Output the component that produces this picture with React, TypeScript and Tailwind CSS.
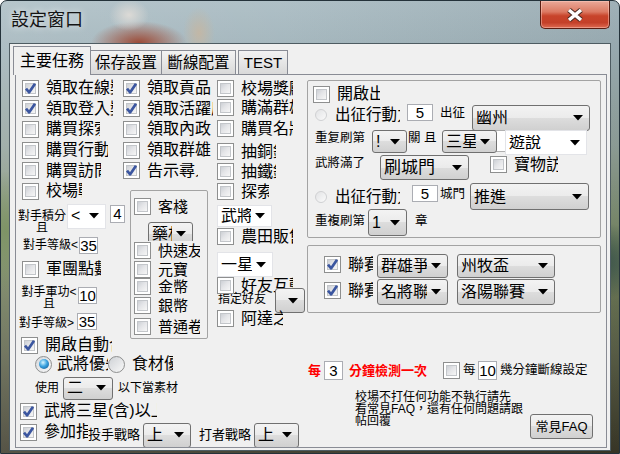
import React from "react";

type CBProps = { checked?: boolean; label?: string; className?: string; text?: string };

const Check = ({ checked = false }: { checked?: boolean }) => (
  <span className="relative block w-[17px] h-[17px] shrink-0 border border-[#8e8f8f] bg-white">
    <span className="absolute inset-[2px] border border-[#c3c6ca] bg-[linear-gradient(135deg,#cdd0d5,#e4e5e8_45%,#f6f6f6)]" />
    {checked && (
      <svg className="absolute left-0 top-0" width="15" height="15" viewBox="0 0 15 15">
        <path d="M3 7.6 L6.2 11.3 L12 2.8" fill="none" stroke="#3b56a0" strokeWidth="2.7" strokeLinejoin="round" />
      </svg>
    )}
  </span>
);

const CB = ({ checked, label, className = "", text = "text-[16px]" }: CBProps) => (
  <div className={`flex shrink-0 items-center gap-[7px] overflow-hidden whitespace-nowrap ${className}`}>
    <Check checked={checked} />
    {label && <span className={`leading-none ${text}`}>{label}</span>}
  </div>
);

const Tri = () => (
  <svg width="10" height="6" viewBox="0 0 10 6" className="shrink-0">
    <polygon points="0,0 10,0 5,5.5" fill="#000" />
  </svg>
);

const Combo = ({
  label = "",
  className = "",
  white = false,
  text = "text-[16px]",
}: {
  label?: string;
  className?: string;
  white?: boolean;
  text?: string;
}) => (
  <div
    className={`flex shrink-0 items-center gap-[4px] overflow-hidden pr-[6px] ${
      white
        ? "bg-white border border-[#e3e4e8]"
        : "rounded-[3px] border border-[#707070] bg-[linear-gradient(#f3f3f3,#ebebeb_50%,#dddddd_50%,#d0d0d0)]"
    } ${className}`}
  >
    <span className={`flex-1 min-w-0 overflow-hidden whitespace-nowrap pl-[3px] leading-none ${text}`}>{label}</span>
    <Tri />
  </div>
);

const TB = ({ value, className = "" }: { value: string; className?: string }) => (
  <div
    className={`flex shrink-0 items-center justify-center bg-white border border-[#abadb3] text-[15px] leading-none font-['Liberation_Sans',sans-serif] ${className}`}
  >
    {value}
  </div>
);

const L = ({ children, className = "" }: { children: React.ReactNode; className?: string }) => (
  <div className={`shrink-0 whitespace-nowrap leading-none ${className}`}>{children}</div>
);

const RadioOn = () => (
  <span className="flex items-center justify-center w-[17px] h-[17px] shrink-0 rounded-full border border-[#8e8f8f] bg-[linear-gradient(135deg,#d6d9dd,#f7f7f7)]">
    <span className="w-[10px] h-[10px] rounded-full bg-[radial-gradient(circle_at_40%_35%,#d8f6ff,#3aa2e0_45%,#0a4b86)]" />
  </span>
);

const RadioOff = () => (
  <span className="block w-[17px] h-[17px] shrink-0 rounded-full border border-[#8e8f8f] bg-[linear-gradient(135deg,#cfd2d6,#f8f8f8)]" />
);

const RadioDis = () => (
  <span className="block w-[12px] h-[12px] shrink-0 rounded-full border border-[#cfd0d2] bg-[linear-gradient(135deg,#e2e3e5,#fafafa)]" />
);

const Row = ({ children, className = "" }: { children: React.ReactNode; className?: string }) => (
  <div className={`flex shrink-0 items-start ${className}`}>{children}</div>
);

export default function App() {
  return (
    <div className="w-[620px] h-[454px] flex flex-col overflow-hidden rounded-t-[7px] border border-[#24323a] px-[8px] pb-[6px] text-black font-['Liberation_Sans','Noto_Sans_CJK_TC',sans-serif] bg-[radial-gradient(20px_16px_at_128px_14px,#dcdad6,transparent),radial-gradient(48px_22px_at_138px_42px,#9c4a36,transparent),radial-gradient(16px_26px_at_198px_32px,#c2b7a6,transparent),radial-gradient(60px_40px_at_590px_260px,#2f4a48,transparent),radial-gradient(40px_60px_at_5px_230px,#7e9466,transparent),linear-gradient(90deg,rgba(255,255,255,0.14),rgba(255,255,255,0.06)_45%,rgba(0,0,0,0.06)),linear-gradient(180deg,#aabcc3_0%,#a0b3ba_10%,#93a39d_32%,#76865f_55%,#5c6149_78%,#3a3828_100%)]">
      {/* title bar */}
      <div className="h-[42px] shrink-0 flex items-start justify-between">
        <div className="pl-[2px] pt-[10px] text-[18px] leading-none text-[#141414] [text-shadow:0_0_7px_rgba(255,255,255,0.9)]">
          設定窗口
        </div>
        <div className="mr-[1px] w-[70px] h-[28px] flex items-center justify-center rounded-b-[5px] border border-t-0 border-[#5a1d12] bg-[linear-gradient(#eaa999,#dc7a63_40%,#c8442b_55%,#c44029_80%,#de6b52)] shadow-[inset_0_0_0_1px_rgba(255,210,200,0.45)]">
          <svg width="22" height="16" viewBox="0 0 22 16">
            <path d="M5 3 L17 13 M17 3 L5 13" stroke="#4a2a22" strokeWidth="5.5" />
            <path d="M5 3 L17 13 M17 3 L5 13" stroke="#ffffff" strokeWidth="3.5" />
          </svg>
        </div>
      </div>

      {/* client area */}
      <div className="flex-1 flex flex-col bg-[#f0f0f0] border border-[#4e5c62] pl-[5px] pr-[3px] pb-[2px]">
        {/* tab strip */}
        <div className="h-[30px] shrink-0 flex items-end">
          <div className="relative z-10 -ml-[2px] -mb-[1px] w-[78px] h-[29px] flex items-center justify-center border border-b-0 border-[#898c95] bg-[#f0f0f0] text-[16px] leading-none pb-[1px]">
            主要任務
          </div>
          <div className="w-[71px] h-[24px] flex items-center justify-center border-t border-r border-[#898c95] bg-[linear-gradient(#f2f2f2,#e6e6e6_50%,#d9d9d9)] text-[15.5px] leading-none">
            保存設置
          </div>
          <div className="w-[74px] h-[24px] flex items-center justify-center border-t border-r border-[#898c95] bg-[linear-gradient(#f2f2f2,#e6e6e6_50%,#d9d9d9)] text-[15.5px] leading-none">
            斷線配置
          </div>
          <div className="ml-[2px] w-[50px] h-[24px] flex items-center justify-center border border-b-0 border-[#898c95] bg-[linear-gradient(#f2f2f2,#e6e6e6_50%,#d9d9d9)] text-[15px] leading-none">
            TEST
          </div>
        </div>

        {/* tab page */}
        <div className="flex-1 flex items-start overflow-hidden border border-[#898c95] bg-[#f0f0f0] pt-[3px]">
          {/* ===== left column ===== */}
          <div className="w-[107px] shrink-0 flex flex-col">
            <CB checked label="領取在線獎勵" className="ml-[6px] h-[20.6px] w-[91px]" />
            <CB checked label="領取登入獎勵" className="ml-[6px] h-[20.6px] w-[91px]" />
            <CB label="購買探索" className="ml-[6px] h-[20.6px] w-[78px]" />
            <CB label="購買行動力" className="ml-[6px] h-[20.6px] w-[86px]" />
            <CB label="購買訪問" className="ml-[6px] h-[20.6px] w-[79px]" />
            <CB label="校場戰鬥" className="ml-[6px] h-[20.6px] w-[60px]" />

            <Row className="mt-[2.4px] h-[25px]">
              <L className="ml-[2px] mt-[6px] w-[48px] text-center text-[12px] leading-[11.5px] whitespace-normal">
                對手積分
                <br />且
              </L>
              <Combo white label="<" className="ml-[1px] w-[39px] h-[25px]" />
              <TB value="4" className="ml-[4px] mt-[1px] w-[15px] h-[18px]" />
            </Row>
            <Row className="mt-[8px] h-[17px]">
              <L className="ml-[7px] mt-[2px] w-[56px] text-[12px]">對手等級&lt;</L>
              <TB value="35" className="w-[19px] h-[17px]" />
            </Row>
            <CB label="軍團點數" className="mt-[5px] ml-[6px] h-[21px] w-[79px]" />
            <Row className="mt-[6px] h-[27px]">
              <L className="ml-[4px] w-[58px] text-center text-[12px] leading-[13px] whitespace-normal">
                對手軍功&lt;
                <br />且
              </L>
              <TB value="10" className="mt-[1px] w-[19px] h-[17px]" />
            </Row>
            <Row className="h-[17px]">
              <L className="ml-[3px] mt-[4px] w-[58px] text-[12px]">對手等級&gt;</L>
              <TB value="35" className="w-[20px] h-[17px]" />
            </Row>
            <CB checked label="開啟自動合成" className="mt-[5px] ml-[5px] h-[21px] w-[91px]" />
            <Row className="-mt-[1px] h-[19px]">
              <div className="ml-[19px] h-[19px] w-[73px] shrink-0 flex items-center gap-[5px] overflow-hidden whitespace-nowrap">
                <RadioOn />
                <span className="text-[16px] leading-none">武將優先</span>
              </div>
              <div className="h-[19px] w-[65px] shrink-0 flex items-center gap-[7px] overflow-hidden whitespace-nowrap bg-[#f0f0f0]">
                <RadioOff />
                <span className="text-[16px] leading-none">食材優先</span>
              </div>
            </Row>
            <Row className="mt-[3px] h-[23px]">
              <L className="ml-[19px] mt-[5px] w-[28px] text-[12px]">使用</L>
              <Combo label="二" className="w-[50px] h-[23px]" />
              <L className="ml-[5px] mt-[5px] text-[12px]">以下當素材</L>
            </Row>
            <CB checked label="武將三星(含)以上" className="mt-[1px] ml-[4px] h-[21px] w-[137px]" />
            <Row className="h-[25px]">
              <CB checked label="參加指定" className="ml-[4px] h-[21px] w-[68px]" />
              <L className="mt-[6px] w-[55px] text-[13px]">投手戰略</L>
              <Combo label="上" className="mt-[1px] w-[48px] h-[25px]" />
              <L className="ml-[8px] mt-[6px] w-[55px] text-[13px]">打者戰略</L>
              <Combo label="上" className="mt-[1px] w-[45px] h-[25px]" />
            </Row>
          </div>

          {/* ===== middle column ===== */}
          <div className="w-[94px] shrink-0 flex flex-col">
            <CB checked label="領取貢品" className="h-[20.6px] w-[90px]" />
            <CB checked label="領取活躍度" className="h-[20.6px] w-[90px]" />
            <CB label="領取內政" className="h-[20.6px] w-[90px]" />
            <CB label="領取群雄" className="h-[20.6px] w-[90px]" />
            <CB checked label="告示尋人" className="h-[20.6px] w-[75px]" />

            <div className="mt-[9px] ml-[7px] w-[78px] h-[149px] shrink-0 flex flex-col rounded-[2px] border border-[#a3a3a3] pt-[5px] pl-[3px]">
              <CB label="客棧" text="text-[15px]" className="h-[21px] w-[70px]" />
              <Combo label="藥材" className="mt-[5px] ml-[14px] w-[45px] h-[24px]" />
              <CB label="快速友情" text="text-[15px]" className="-mt-[5px] h-[20px] w-[66px] bg-[#f0f0f0]" />
              <CB label="元寶" text="text-[15px]" className="h-[17px] w-[66px] bg-[#f0f0f0]" />
              <CB label="金幣" text="text-[15px]" className="h-[18px] w-[66px] bg-[#f0f0f0]" />
              <CB label="銀幣" text="text-[15px]" className="h-[20px] w-[66px] bg-[#f0f0f0]" />
              <CB label="普通卷" text="text-[15px]" className="h-[21px] w-[66px] bg-[#f0f0f0]" />
            </div>
          </div>

          {/* ===== third column ===== */}
          <div className="w-[90px] shrink-0 flex flex-col">
            <CB label="校場獎勵" className="h-[21px] w-[76px]" />
            <CB label="購滿群雄" className="-mt-[2px] h-[21px] w-[76px]" />
            <CB label="購買名將" className="h-[21px] w-[76px]" />
            <CB label="抽銅錢" className="mt-[2px] h-[21px] w-[59px]" />
            <CB label="抽鐵錢" className="-mt-[1px] h-[21px] w-[59px]" />
            <CB label="探索" className="-mt-[1px] h-[21px] w-[52px]" />
            <Combo white label="武將" className="mt-[3px] w-[55px] h-[22px]" />
            <CB label="農田販售" className="-mt-[1px] h-[21px] w-[76px]" />
            <Combo white label="一星" className="relative z-10 mt-[5px] w-[56px] h-[25px]" />
            <CB label="好友互動" className="-mt-[2px] h-[21px] w-[76px]" />
            <Row className="-mt-[8px] h-[25px]">
              <L className="ml-[1px] mt-[5px] w-[57px] text-[12px]">指定好友</L>
              <Combo className="w-[30px] h-[25px]" />
            </Row>
            <CB label="阿達之" className="-mt-[5px] h-[21px] w-[66px]" />
          </div>

          {/* ===== right column ===== */}
          <div className="w-[294px] shrink-0 mt-[2px] flex flex-col">
            {/* group 1 */}
            <div className="h-[158px] flex flex-col rounded-[2px] border border-[#a3a3a3] pt-[3px]">
              <CB label="開啟出征" className="ml-[5px] h-[20px] w-[67px]" />
              <Row className="h-[26px]">
                <div className="ml-[7px] mt-[1px] h-[20px] w-[85px] shrink-0 flex items-center gap-[8px] overflow-hidden whitespace-nowrap">
                  <RadioDis />
                  <span className="text-[15.5px] leading-none">出征行動力</span>
                </div>
                <TB value="5" className="ml-[7px] w-[26px] h-[17px]" />
                <L className="ml-[7px] mt-[3px] w-[25px] text-[12.5px]">出征</L>
                <Combo label="幽州" className="ml-[7px] mt-[1px] w-[118px] h-[26px]" />
              </Row>
              <Row className="h-[25px]">
                <L className="ml-[7px] mt-[2px] w-[50px] text-[12.5px]">重复刷第</L>
                <Combo label="!" className="ml-[7px] w-[35px] h-[23px]" />
                <L className="ml-[1px] mt-[2px] w-[34px] text-[12.5px]">關 且</L>
                <Combo label="三星" className="relative z-10 w-[55px] h-[23px]" />
                <div className="-ml-[2px] w-[12px] h-[22px] shrink-0 border border-[#b0b0b0] bg-white" />
                <Combo white label="遊說" className="relative z-10 -ml-[2px] w-[82px] h-[25px]" />
              </Row>
              <Row className="h-[28px]">
                <L className="ml-[7px] mt-[2px] w-[50px] text-[12.5px]">武將滿了</L>
                <Combo label="刷城門" text="text-[17px]" className="ml-[15px] w-[89px] h-[25px]" />
                <CB label="寶物訪問" className="ml-[21px] -mt-[1px] h-[21px] w-[68px]" />
              </Row>
              <Row className="h-[26px]">
                <div className="ml-[7px] mt-[4px] h-[20px] w-[85px] shrink-0 flex items-center gap-[8px] overflow-hidden whitespace-nowrap">
                  <RadioDis />
                  <span className="text-[15.5px] leading-none">出征行動力</span>
                </div>
                <TB value="5" className="ml-[12px] mt-[2px] w-[26px] h-[17px]" />
                <L className="ml-[2px] mt-[5px] w-[25px] text-[12.5px]">城門</L>
                <Combo label="推進" className="ml-[5px] w-[119px] h-[27px]" />
              </Row>
              <Row className="h-[27px]">
                <L className="ml-[7px] mt-[6px] w-[50px] text-[12.5px]">重複刷第</L>
                <Combo label="1" className="ml-[3px] w-[39px] h-[27px]" />
                <L className="ml-[8px] mt-[6px] text-[12.5px]">章</L>
              </Row>
            </div>

            {/* group 2 */}
            <div className="mt-[7px] h-[68px] flex flex-col rounded-[2px] border border-[#a3a3a3] pt-[8px] pl-[16px]">
              <Row className="h-[25px]">
                <CB checked label="聯賽" className="h-[21px] w-[49px]" />
                <Combo label="群雄爭霸" className="ml-[4px] w-[71px] h-[24px]" />
                <Combo label="州牧盃" className="ml-[9px] w-[98px] h-[24px]" />
              </Row>
              <Row className="h-[26px]">
                <CB checked label="聯賽" className="mt-[1px] h-[21px] w-[49px]" />
                <Combo label="名將聯賽" className="ml-[4px] w-[71px] h-[26px]" />
                <Combo label="洛陽聯賽" className="ml-[9px] w-[98px] h-[26px]" />
              </Row>
            </div>

            {/* check interval row */}
            <Row className="mt-[48px] ml-[1px] h-[19px]">
              <L className="mt-[3px] w-[13px] text-[13px] font-bold text-[#ff0000]">每</L>
              <TB value="3" className="ml-[3px] w-[19px] h-[19px]" />
              <L className="ml-[6px] mt-[3px] w-[78px] text-[13px] font-bold text-[#ff0000]">分鐘檢測一次</L>
              <div className="ml-[16px] mt-[1px] shrink-0">
                <Check />
              </div>
              <L className="ml-[3px] mt-[3px] w-[13px] text-[12.5px]">每</L>
              <TB value="10" className="ml-[2px] w-[19px] h-[19px]" />
              <L className="ml-[3px] mt-[3px] text-[12.5px]">幾分鐘斷線設定</L>
            </Row>

            {/* notice + FAQ */}
            <Row className="mt-[11px] ml-[48px]">
              <L className="w-[175px] text-[12px] leading-[13.5px]">
                校場不打任何功能不執行請先
                <br />
                看常見FAQ，還有任何問題請跟
                <br />
                帖回覆
              </L>
              <div className="mt-[23px] w-[63px] h-[25px] shrink-0 flex items-center justify-center rounded-[3px] border border-[#707070] bg-[linear-gradient(#f3f3f3,#ebebeb_50%,#dddddd_50%,#d0d0d0)] text-[13px] leading-none">
                常見FAQ
              </div>
            </Row>
          </div>
        </div>
      </div>
    </div>
  );
}
